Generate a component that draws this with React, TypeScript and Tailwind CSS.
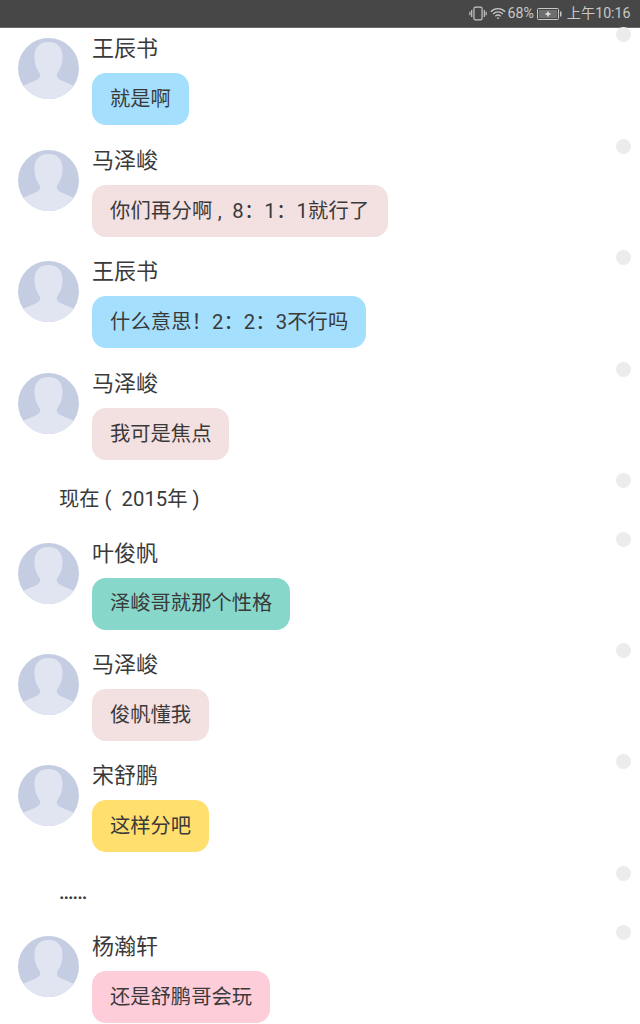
import React from 'react';

const FONT = 'font-["Roboto","Noto_Sans_CJK_SC",sans-serif]';

type Item =
  | { kind: 'msg'; name: string; text: string; color: string; h: string; extra?: string }
  | { kind: 'note'; text: string; h: string; extra?: string };

const items: Item[] = [
  { kind: 'msg', name: '王辰书', text: '就是啊', color: 'bg-[#a5dffe]', h: 'h-[112px]' },
  { kind: 'msg', name: '马泽峻', text: '你们再分啊 ,\u00a0 8：1：1就行了', color: 'bg-[#f3e0e1]', h: 'h-[111.4px]', extra: 'tracking-[0.2px]' },
  { kind: 'msg', name: '王辰书', text: '什么意思！2：2：3不行吗', color: 'bg-[#a5dffe]', h: 'h-[111.4px]', extra: 'tracking-[0.1px]' },
  { kind: 'msg', name: '马泽峻', text: '我可是焦点', color: 'bg-[#f3e0e1]', h: 'h-[111.4px]' },
  { kind: 'note', text: '现在 (\u00a0\u00a02015年 )', h: 'h-[58.4px]' },
  { kind: 'msg', name: '叶俊帆', text: '泽峻哥就那个性格', color: 'bg-[#87d8cb]', h: 'h-[111.4px]' },
  { kind: 'msg', name: '马泽峻', text: '俊帆懂我', color: 'bg-[#f3e0e1]', h: 'h-[111.4px]' },
  { kind: 'msg', name: '宋舒鹏', text: '这样分吧', color: 'bg-[#ffdf6e]', h: 'h-[111.4px]' },
  { kind: 'note', text: '......', h: 'h-[59px]', extra: 'tracking-[-1.1px] font-medium' },
  { kind: 'msg', name: '杨瀚轩', text: '还是舒鹏哥会玩', color: 'bg-[#fecdda]', h: 'h-[111.4px]' },
];

const Avatar = () => (
  <svg viewBox="0 0 61 61" className="w-[61px] h-[61px] shrink-0">
    <defs>
      <clipPath id="avatar-clip">
        <circle cx="30.5" cy="30.5" r="30.5" />
      </clipPath>
    </defs>
    <circle cx="30.5" cy="30.5" r="30.5" fill="#c5cde3" />
    <path
      clipPath="url(#avatar-clip)"
      d="M30.5 4C21 4 16.500 10 16.500 19c0 8 3 13 5 16 1.500 2.500 .5 5-2 6.500-5 3-13 5-18 8v14h58V49.500c-5-3-13-5-18-8-2.500-1.500-3.500-4-2-6.500 2-3 5-8 5-16 0-9-4.500-15-14-15z"
      fill="#e1e5f1"
    />
  </svg>
);

const Dot = () => (
  <span className="absolute right-[9px] -top-[1px] w-[15px] h-[15px] rounded-full bg-[#ececec]" />
);

const StatusBar = () => (
  <div className="h-[28px] bg-[#474747] border-b border-[#6a6a6a] flex items-center justify-end pr-[9.500px] text-[#c8c8c8] text-[14.2px] leading-none shrink-0">
    <svg viewBox="0 0 20 16" className="w-[18px] h-[15px] mr-[3px]" fill="none" stroke="#c8c8c8" strokeWidth="1.3">
      <rect x="5.500" y="1" width="9" height="14" rx="1.500" />
      <path d="M3 4v8M1 6v4M17 4v8M19 6v4" />
    </svg>
    <svg viewBox="0 0 18 14" className="w-[16px] h-[13px] mr-[1px]" fill="none" stroke="#c8c8c8" strokeWidth="1.4">
      <path d="M1 5c4.500-4.500 11.500-4.500 16 0M3.500 7.500c3-3 8-3 11 0M6 10c1.700-1.500 4.300-1.500 6 0" />
      <circle cx="9" cy="12.300" r="1" fill="#c8c8c8" stroke="none" />
    </svg>
    <span className="mr-[3px]">68%</span>
    <svg viewBox="0 0 25 12" className="w-[25px] h-[12px] mr-[5px]" fill="none">
      <rect x="0.500" y="0.500" width="21" height="11" rx="1" stroke="#c8c8c8" />
      <rect x="2" y="2" width="18" height="8" fill="#6e6e6e" />
      <path d="M11 3.500v5M8.500 6h5" stroke="#e6e6e6" strokeWidth="1.500" />
      <rect x="23" y="3.500" width="1.500" height="5" fill="#c8c8c8" />
    </svg>
    <span>上午10:16</span>
  </div>
);

export default function App() {
  return (
    <div className={`w-[640px] h-[1024px] overflow-hidden bg-white flex flex-col text-[#3a3a3a] ${FONT}`}>
      <StatusBar />
      {items.map((item, i) =>
        item.kind === 'note' ? (
          <div key={i} className={`relative shrink-0 ${item.h} pl-[59px] pt-[11px] text-[20.3px] leading-[28px] ${item.extra ?? ''}`}>
            <Dot />
            {item.text}
          </div>
        ) : (
          <div key={i} className={`relative shrink-0 ${item.h} flex pl-[18px] pt-[10px] gap-[13px]`}>
            <Dot />
            <Avatar />
            <div className="flex flex-col items-start">
              <div className="text-[22px] leading-[26px] -mt-[2px] h-[37px]">{item.name}</div>
              <div className={`${item.color} h-[52px] rounded-[14px] px-[18px] flex items-center text-[20.3px] leading-none ${item.extra ?? ''}`}>
                {item.text}
              </div>
            </div>
          </div>
        ),
      )}
    </div>
  );
}
